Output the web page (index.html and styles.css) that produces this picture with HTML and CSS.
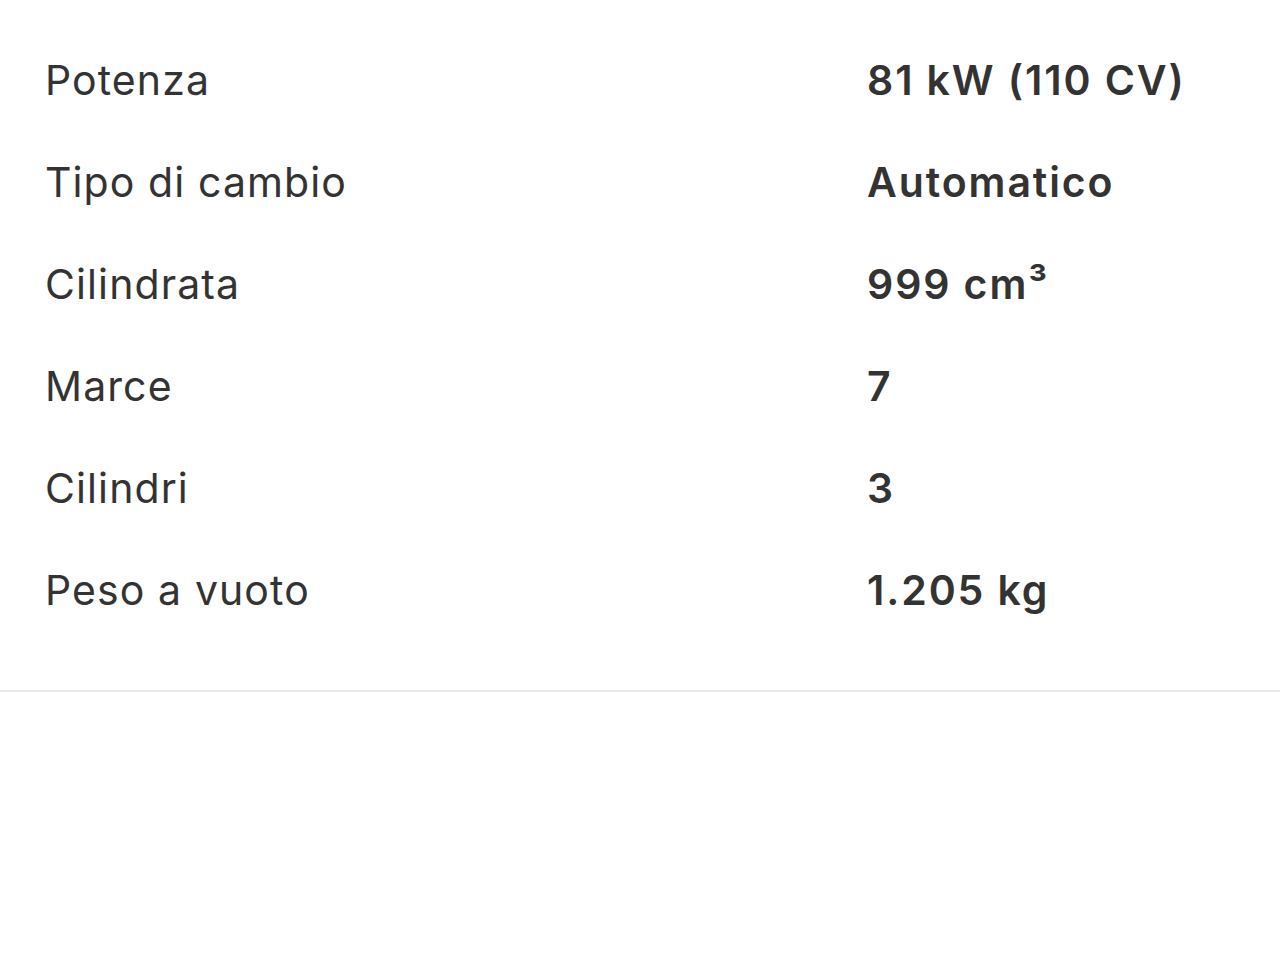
FILE: index.html
```html
<!DOCTYPE html>
<html>
<head>
    <title>Dati tecnici</title>
    <link rel="stylesheet" href="styles.css">
</head>
<body>
    <div class="specs">
        <div class="spec-row">
            <div class="spec-label">Potenza</div>
            <div class="spec-value">81 kW (110 CV)</div>
        </div>
        <div class="spec-row">
            <div class="spec-label">Tipo di cambio</div>
            <div class="spec-value">Automatico</div>
        </div>
        <div class="spec-row">
            <div class="spec-label">Cilindrata</div>
            <div class="spec-value">999 cm³</div>
        </div>
        <div class="spec-row">
            <div class="spec-label">Marce</div>
            <div class="spec-value">7</div>
        </div>
        <div class="spec-row">
            <div class="spec-label">Cilindri</div>
            <div class="spec-value">3</div>
        </div>
        <div class="spec-row">
            <div class="spec-label">Peso a vuoto</div>
            <div class="spec-value">1.205 kg</div>
        </div>
    </div>
</body>
</html>
```

FILE: styles.css
```css
body {
    font-family: Inter, Roboto, "Noto Sans", sans-serif;
    margin: 0;
    background-color: white;
    color: #333;
}
.specs {
    padding: 29px 0 49px 45px;
    border-bottom: 2px solid #e8e8e8;
}
.spec-row {
    display: grid;
    grid-template-columns: 822px 1fr;
    height: 102px;
    line-height: 102px;
    font-size: 41px;
}
.spec-label {
    letter-spacing: 1.1px;
}
.spec-value {
    font-weight: 600;
    letter-spacing: 1.9px;
}
```
